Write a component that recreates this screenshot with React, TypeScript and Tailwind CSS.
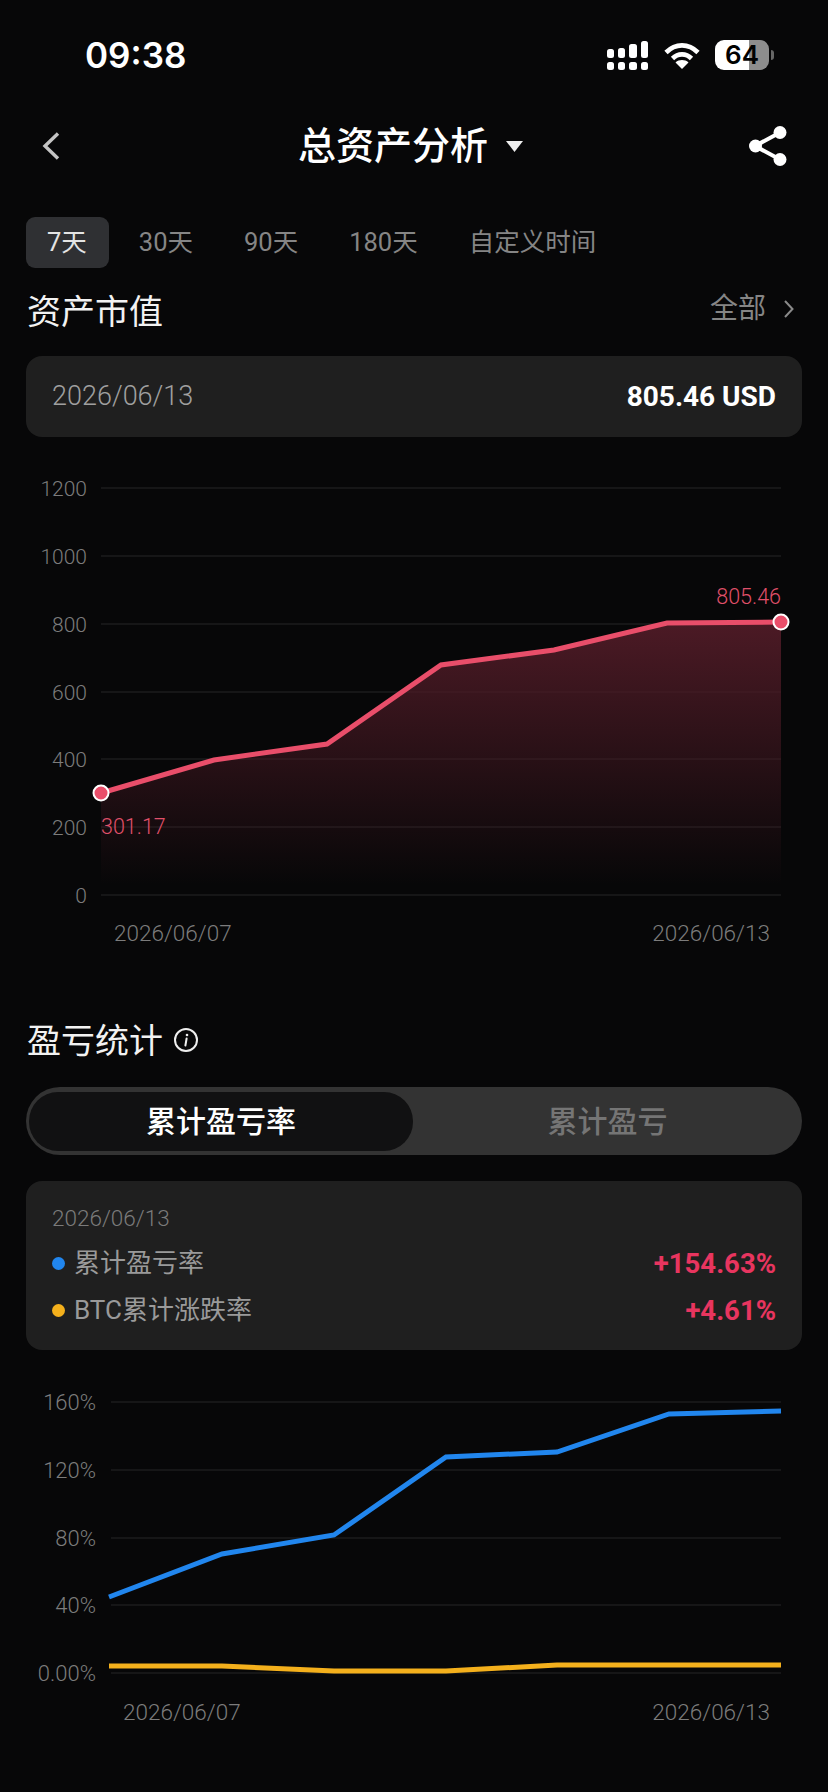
import React from 'react';

const FONT = 'font-[Roboto,"Noto_Sans_CJK_SC",sans-serif]';

const tabs = ['7天', '30天', '90天', '180天', '自定义时间'];

function StatusBar() {
  return (
    <div className="flex h-[110px] items-center justify-between pl-[85px] pr-[54px]">
      <span className="font-[Inter,sans-serif] text-[35px] font-semibold text-white">09:38</span>
      <div className="flex items-center">
        <svg width="42" height="29" viewBox="0 0 42 29" fill="#fff">
          <rect x="0" y="8" width="7" height="9" rx="2.5" />
          <rect x="11" y="7" width="7" height="10" rx="2.5" />
          <rect x="22" y="3" width="8" height="14" rx="2.5" />
          <rect x="34" y="0" width="7" height="17" rx="2.5" />
          <rect x="0" y="21" width="7" height="8" rx="2.5" />
          <rect x="11" y="21" width="7" height="8" rx="2.5" />
          <rect x="22" y="21" width="8" height="8" rx="2.5" />
          <rect x="34" y="21" width="7" height="8" rx="2.5" />
        </svg>
        <svg className="ml-[15px]" width="36" height="27" viewBox="0 0 36 27" fill="none" stroke="#fff" strokeWidth="4.6">
          <path d="M2 10.5C11.5 1 24.5 1 34 10.5" />
          <path d="M8.5 16.5C14 11 22 11 27.5 16.5" />
          <path d="M18 27l-6.5-6.6c3.6-3.2 9.4-3.2 13 0z" fill="#fff" stroke="none" />
        </svg>
        <div className="relative ml-[15px] flex h-[30px] w-[54px] items-center justify-center overflow-hidden rounded-[9px] bg-[linear-gradient(90deg,#fff_0,#fff_63%,#8d8d8d_63%,#8d8d8d_100%)]">
          <span className="font-[Inter,sans-serif] text-[26px] font-semibold leading-none text-black">64</span>
        </div>
        <div className="ml-[2px] h-[10px] w-[3px] rounded-r-full bg-[#666]" />
      </div>
    </div>
  );
}

function Header() {
  return (
    <div className="flex h-[72px] items-center justify-between pl-[42px] pr-[41px]">
      <svg width="18" height="28" viewBox="0 0 18 28" fill="none" stroke="#c4c4c4" strokeWidth="3.4">
        <path d="M16 1.5L3 14l13 12.5" />
      </svg>
      <div className="ml-[12px] flex items-center">
        <span className="text-[38px] font-medium leading-none text-white">总资产分析</span>
        <svg className="ml-[18px]" width="17" height="11" viewBox="0 0 17 11" fill="#eee">
          <path d="M0 0h17l-8.5 11z" />
        </svg>
      </div>
      <svg width="38" height="40" viewBox="0 0 38 40" fill="#fff" stroke="#fff">
        <path d="M31 6.5L6 20l25 13.5" fill="none" strokeWidth="4" />
        <circle cx="31" cy="6.5" r="6.5" stroke="none" />
        <circle cx="6.5" cy="20" r="6.5" stroke="none" />
        <circle cx="31" cy="33.5" r="6.5" stroke="none" />
      </svg>
    </div>
  );
}

function RangeTabs() {
  return (
    <div className="mt-[35px] flex gap-[9px] px-[26px]">
      {tabs.map((t, i) => (
        <div
          key={t}
          className={
            i === 0
              ? 'flex h-[51px] items-center rounded-[9px] bg-[#2f3033] pl-[21px] pr-[22px] text-[25.5px] text-[#e4e4e4]'
              : 'flex h-[51px] items-center px-[21px] text-[25.5px] text-[#858585]'
          }
        >
          {t}
        </div>
      ))}
    </div>
  );
}

type AxisLabel = { y: number; text: string };

const assetLabels: AxisLabel[] = [
  { y: 488, text: '1200' },
  { y: 556, text: '1000' },
  { y: 624, text: '800' },
  { y: 692, text: '600' },
  { y: 759, text: '400' },
  { y: 827, text: '200' },
  { y: 895, text: '0' },
];

const pnlLabels: AxisLabel[] = [
  { y: 1402, text: '160%' },
  { y: 1470, text: '120%' },
  { y: 1538, text: '80%' },
  { y: 1605, text: '40%' },
  { y: 1673, text: '0.00%' },
];

const assetPoints = '101,793 214,760 327,744 441,665 554,650 667,623 781,622';
const bluePoints = '109,1597 222,1554 334,1535 446,1457 557,1452 669,1414 781,1411';
const yellowPoints = '109,1666 222,1666 334,1671 446,1671 557,1665 669,1665 781,1665';

function AssetChart() {
  return (
    <svg className="mt-[33px] block" width="828" height="480" viewBox="0 470 828 480">
      <defs>
        <linearGradient id="assetFill" x1="0" y1="622" x2="0" y2="885" gradientUnits="userSpaceOnUse">
          <stop offset="0" stopColor="#4c1a25" />
          <stop offset="1" stopColor="#4c1a25" stopOpacity="0" />
        </linearGradient>
      </defs>
      {assetLabels.map((l) => (
        <g key={l.text}>
          <line x1="101" x2="781" y1={l.y} y2={l.y} stroke="#1c1c1d" strokeWidth="1.5" />
          <text x="87" y={l.y + 8} textAnchor="end" fill="#7c7c7c" className="text-[21px] font-light">
            {l.text}
          </text>
        </g>
      ))}
      <polygon points={`${assetPoints} 781,895 101,895`} fill="url(#assetFill)" />
      <polyline points={assetPoints} fill="none" stroke="#e94e6a" strokeWidth="5" />
      <circle cx="101" cy="793" r="7.5" fill="#e94e6a" stroke="#fff" strokeWidth="2" />
      <circle cx="781" cy="622" r="7.5" fill="#e94e6a" stroke="#fff" strokeWidth="2" />
      <text x="101" y="834" fill="#e0506a" className="text-[21.5px] font-light">301.17</text>
      <text x="781" y="604" textAnchor="end" fill="#e0506a" className="text-[21.5px] font-light">805.46</text>
      <text x="114" y="941" fill="#7c7c7c" className="text-[22.5px] font-light">2026/06/07</text>
      <text x="770" y="941" textAnchor="end" fill="#7c7c7c" className="text-[22.5px] font-light">2026/06/13</text>
    </svg>
  );
}

function PnlChart() {
  return (
    <svg className="mt-[30px] block" width="828" height="350" viewBox="0 1380 828 350">
      {pnlLabels.map((l) => (
        <g key={l.text}>
          <line x1="111" x2="781" y1={l.y} y2={l.y} stroke="#1c1c1d" strokeWidth="1.5" />
          <text x="96" y={l.y + 8} textAnchor="end" fill="#7c7c7c" className="text-[22px] font-light">
            {l.text}
          </text>
        </g>
      ))}
      <polyline points={bluePoints} fill="none" stroke="#2186ee" strokeWidth="5" />
      <polyline points={yellowPoints} fill="none" stroke="#f4b01c" strokeWidth="5" />
      <text x="123" y="1720" fill="#7c7c7c" className="text-[22.5px] font-light">2026/06/07</text>
      <text x="770" y="1720" textAnchor="end" fill="#7c7c7c" className="text-[22.5px] font-light">2026/06/13</text>
    </svg>
  );
}

function PnlRow({ dot, label, value }: { dot: string; label: string; value: string }) {
  return (
    <div className="flex h-[47px] items-center justify-between">
      <div className="flex items-center">
        <span className={dot} />
        <span className="ml-[9px] text-[26px] text-[#9a9a9a]">{label}</span>
      </div>
      <span className="text-[27.5px] font-bold text-[#e8355f]">{value}</span>
    </div>
  );
}

export default function App() {
  return (
    <div className={`h-[1792px] w-[828px] overflow-hidden bg-[#070708] ${FONT}`}>
      <StatusBar />
      <Header />
      <RangeTabs />

      {/* 资产市值 */}
      <div className="mt-[20px] flex h-[44px] items-center justify-between pl-[27px] pr-[34px]">
        <span className="mt-[3px] text-[34px] leading-none text-[#f2f2f2]">资产市值</span>
        <div className="mb-[3px] flex items-center text-[#858585]">
          <span className="text-[28px] leading-none">全部</span>
          <svg className="ml-[18px]" width="10" height="18" viewBox="0 0 10 18" fill="none" stroke="#8a8a8a" strokeWidth="2">
            <path d="M1 1l7.5 8L1 17" />
          </svg>
        </div>
      </div>
      <div className="mx-[26px] mt-[24px] flex h-[81px] items-center justify-between rounded-[16px] bg-[#1f1f1f] px-[26px]">
        <span className="text-[27px] font-light text-[#a0a0a0]">2026/06/13</span>
        <span className="text-[28px] font-bold text-white">805.46 USD</span>
      </div>
      <AssetChart />

      {/* 盈亏统计 */}
      <div className="mt-[68px] flex h-[44px] items-center pl-[27px]">
        <span className="mt-[2px] text-[34px] leading-none text-[#f2f2f2]">盈亏统计</span>
        <svg className="ml-[11px]" width="24" height="24" viewBox="0 0 24 24" fill="none" stroke="#eee" strokeWidth="2">
          <circle cx="12" cy="12" r="11" />
          <path d="M12.6 10.5l-1.2 7" strokeLinecap="round" />
          <circle cx="13" cy="7" r="1.3" fill="#eee" stroke="none" />
        </svg>
      </div>
      <div className="mx-[26px] mt-[25px] flex h-[68px] items-center rounded-full bg-[#333333] pl-[3px]">
        <div className="flex h-[59px] w-[384px] items-center justify-center rounded-[29px] bg-[#111112] text-[30px] font-medium text-white">
          累计盈亏率
        </div>
        <div className="flex-1 text-center text-[30px] font-medium text-[#757575]">累计盈亏</div>
      </div>
      <div className="mx-[26px] mt-[26px] h-[169px] rounded-[16px] bg-[#1f1f1f] px-[26px] pt-[20px]">
        <div className="text-[22.5px] font-light leading-[34px] text-[#7b7b7b]">2026/06/13</div>
        <div className="mt-[5px]">
          <PnlRow dot="h-[13px] w-[13px] rounded-full bg-[#2186ee]" label="累计盈亏率" value="+154.63%" />
          <PnlRow dot="h-[13px] w-[13px] rounded-full bg-[#f4b01c]" label="BTC累计涨跌率" value="+4.61%" />
        </div>
      </div>
      <PnlChart />
    </div>
  );
}
